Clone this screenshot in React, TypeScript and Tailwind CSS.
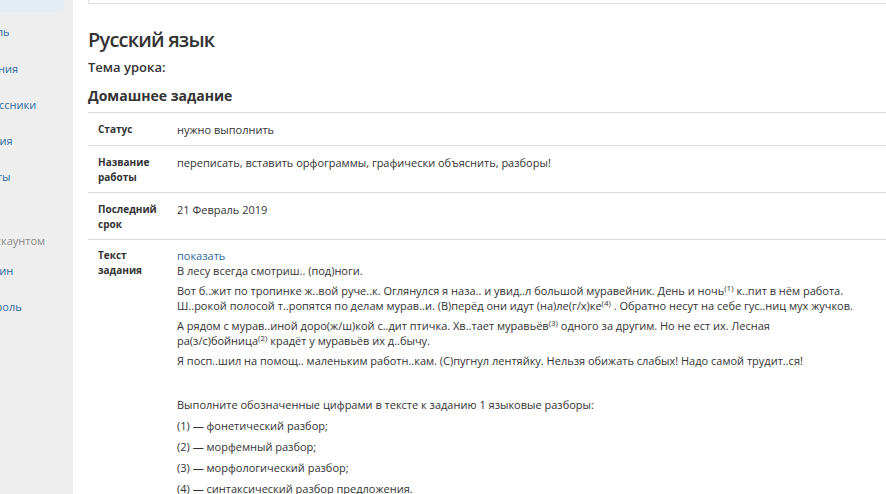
import React from 'react'

const sideLinks = [
  { label: 'Мой портфель', cls: 'mt-[12px] ml-[3px]' },
  { label: 'Мои достижения', cls: 'mt-[22px] ml-[-1px]' },
  { label: 'Мои одноклассники', cls: 'mt-[21px]' },
  { label: 'Мои сообщения', cls: 'mt-[21px] ml-[-3px]' },
  { label: 'Мои документы', cls: 'mt-[21px] ml-[-3px]' },
]

function Sup({ n }: { n: number }) {
  return <sup className="text-[8px]">({n})</sup>
}

export default function App() {
  return (
    <div className="flex h-[494px] w-[886px] overflow-hidden bg-white text-[#333] font-['Open_Sans','Noto_Sans',sans-serif]">
      {/* sidebar, page is scrolled right so only the ends of the links are visible */}
      <aside className="w-[73px] shrink-0 overflow-hidden bg-[#eeeeee]">
        <div className="h-[12px] w-[64px] rounded-br-[4px] bg-[#e3ebf3]" />
        <nav className="ml-[-72px] flex flex-col items-start whitespace-nowrap text-[11px] leading-[15px]">
          {sideLinks.map((l) => (
            <a key={l.label} href="#" className={`${l.cls} text-[#2f6aa3]`}>
              {l.label}
            </a>
          ))}
          <span className="mt-[49px] ml-[-7px] text-[#888]">Управление аккаунтом</span>
          <a href="#" className="mt-[15px] ml-[4px] text-[#2f6aa3]">Сменить логин</a>
          <a href="#" className="mt-[21px] ml-[5px] text-[#2f6aa3]">Сменить пароль</a>
        </nav>
      </aside>

      <main className="flex-1 pl-[15px]">
        <div className="h-[4px] border-b border-l border-[#dddddd]" />

        <h1 className="mt-[23px] text-[20px] font-semibold leading-[26px] tracking-[-0.8px] text-[#333]">Русский язык</h1>
        <div className="mt-[5px] text-[13px] font-semibold leading-[18px]">Тема урока:</div>
        <h2 className="mt-[10px] text-[14px] font-bold leading-[20px]">Домашнее задание</h2>

        <table className="mt-[6px] w-full border-collapse text-[11px] leading-[15px]">
          <tbody>
            <tr className="border-t border-[#dddddd]">
              <th className="w-[89px] pl-[10px] pr-[6px] pt-[9px] pb-[8px] text-left align-top text-[10px] font-bold">Статус</th>
              <td className="pt-[9px] pb-[8px] align-top">нужно выполнить</td>
            </tr>
            <tr className="border-t border-[#dddddd]">
              <th className="h-[47px] pl-[10px] pr-[6px] pt-[9px] pb-[7px] text-left align-top text-[10px] font-bold">Название работы</th>
              <td className="pt-[9px] pb-[7px] align-top">переписать, вставить орфограммы, графически объяснить, разборы!</td>
            </tr>
            <tr className="border-t border-[#dddddd]">
              <th className="h-[47px] pl-[10px] pr-[6px] pt-[9px] pb-[7px] text-left align-top text-[10px] font-bold">Последний срок</th>
              <td className="pt-[9px] pb-[7px] align-top">21 Февраль 2019</td>
            </tr>
            <tr className="border-t border-[#dddddd]">
              <th className="pl-[10px] pr-[6px] pt-[8px] text-left align-top text-[10px] font-bold">Текст задания</th>
              <td className="pt-[8px] align-top">
                <a href="#" className="text-[#2f6aa3]">показать</a>
                <div className="flex flex-col gap-[5px]">
                  <p>В лесу всегда смотриш.. (под)ноги.</p>
                  <p>
                    Вот б..жит по тропинке ж..вой руче..к. Оглянулся я наза.. и увид..л большой муравейник. День и ночь<Sup n={1} /> к..пит в нём работа.
                    <br />
                    Ш..рокой полосой т..ропятся по делам мурав..и. (В)перёд они идут (на)ле(г/х)ке<Sup n={4} /> . Обратно несут на себе гус..ниц мух жучков.
                  </p>
                  <p>
                    А рядом с мурав..иной доро(ж/ш)кой с..дит птичка. Хв..тает муравьёв<Sup n={3} /> одного за другим. Но не ест их. Лесная
                    <br />
                    ра(з/с)бойница<Sup n={2} /> крадёт у муравьёв их д..бычу.
                  </p>
                  <p>Я посп..шил на помощ.. маленьким работн..кам. (С)пугнул лентяйку. Нельзя обижать слабых! Надо самой трудит..ся!</p>
                  <p className="h-[19px]" />
                  <p>Выполните обозначенные цифрами в тексте к заданию 1 языковые разборы:</p>
                  <p className="mt-[1px]">(1) — фонетический разбор;</p>
                  <p className="mt-[1px]">(2) — морфемный разбор;</p>
                  <p className="mt-[1px]">(3) — морфологический разбор;</p>
                  <p className="mt-[1px]">(4) — синтаксический разбор предложения.</p>
                </div>
              </td>
            </tr>
          </tbody>
        </table>
      </main>
    </div>
  )
}
